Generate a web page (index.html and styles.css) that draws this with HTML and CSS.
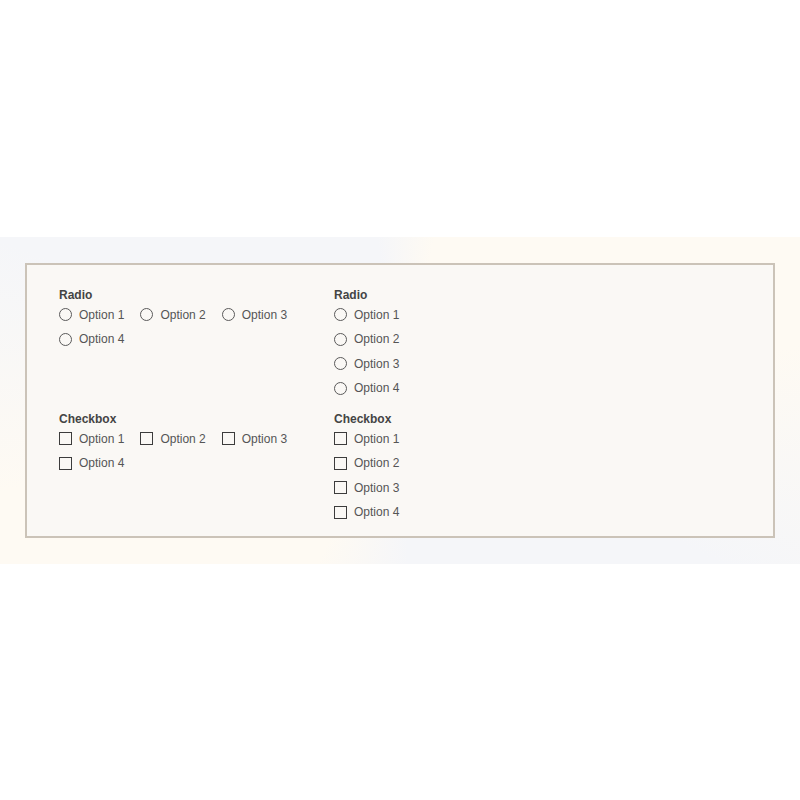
FILE: index.html
```html
<!DOCTYPE html>
<html lang="en">

<head>
    <meta charset="UTF-8">
    <meta name="viewport" content="width=device-width, initial-scale=1.0">
    <title>Radio and Checkbox</title>
    <link rel="stylesheet" href="styles.css">
</head>

<body>

    <div class="band">
        <div class="panel">

            <!-- Radio groups -->
            <div class="group">
                <div class="group-title">Radio</div>
                <div class="options inline">
                    <label class="option"><input type="radio" name="r1"><span>Option 1</span></label>
                    <label class="option"><input type="radio" name="r1"><span>Option 2</span></label>
                    <label class="option"><input type="radio" name="r1"><span>Option 3</span></label>
                    <label class="option"><input type="radio" name="r1"><span>Option 4</span></label>
                </div>
            </div>

            <div class="group">
                <div class="group-title">Radio</div>
                <div class="options stacked">
                    <label class="option"><input type="radio" name="r2"><span>Option 1</span></label>
                    <label class="option"><input type="radio" name="r2"><span>Option 2</span></label>
                    <label class="option"><input type="radio" name="r2"><span>Option 3</span></label>
                    <label class="option"><input type="radio" name="r2"><span>Option 4</span></label>
                </div>
            </div>

            <!-- Checkbox groups -->
            <div class="group">
                <div class="group-title">Checkbox</div>
                <div class="options inline">
                    <label class="option"><input type="checkbox"><span>Option 1</span></label>
                    <label class="option"><input type="checkbox"><span>Option 2</span></label>
                    <label class="option"><input type="checkbox"><span>Option 3</span></label>
                    <label class="option"><input type="checkbox"><span>Option 4</span></label>
                </div>
            </div>

            <div class="group">
                <div class="group-title">Checkbox</div>
                <div class="options stacked">
                    <label class="option"><input type="checkbox"><span>Option 1</span></label>
                    <label class="option"><input type="checkbox"><span>Option 2</span></label>
                    <label class="option"><input type="checkbox"><span>Option 3</span></label>
                    <label class="option"><input type="checkbox"><span>Option 4</span></label>
                </div>
            </div>

        </div>
    </div>

</body>

</html>
```

FILE: styles.css
```css
body {
    font-family: "Liberation Sans", Arial, sans-serif;
    margin: 0;
    min-height: 100vh;
    display: flex;
    align-items: center;
    background-color: #fff;
}

.band {
    width: 100%;
    padding: 26px 25px;
    box-sizing: border-box;
    background: conic-gradient(from 12deg at 50% 50%,
            #fefaf3 0deg, #fefaf3 70deg,
            #f5f6f9 105deg, #f5f6f9 165deg,
            #fefaf3 195deg, #fefaf3 245deg,
            #f5f6f9 280deg, #f5f6f9 340deg,
            #fefaf3 360deg);
}

.panel {
    display: grid;
    grid-template-columns: 275px 275px;
    row-gap: 14.5px;
    padding: 22px 32px 15.5px;
    background-color: #faf8f5;
    border: 2px solid #cbc3b8;
}

.group-title {
    font-size: 12px;
    font-weight: bold;
    line-height: 16px;
    color: #444;
    margin-bottom: 4px;
}

.options {
    display: flex;
    flex-wrap: wrap;
    row-gap: 8.5px;
}

.options.inline {
    column-gap: 16px;
    width: 255px;
}

.options.stacked {
    flex-direction: column;
}

.option {
    display: inline-flex;
    align-items: center;
    gap: 7px;
    height: 16px;
    font-size: 12px;
    color: #555;
}

.option input {
    appearance: none;
    -webkit-appearance: none;
    margin: 0;
    width: 13px;
    height: 13px;
    background-color: transparent;
}

.option input[type="radio"] {
    border: 1.5px solid #5a5a5a;
    border-radius: 50%;
}

.option input[type="checkbox"] {
    border: 1.5px solid #3c3c3c;
}
```
